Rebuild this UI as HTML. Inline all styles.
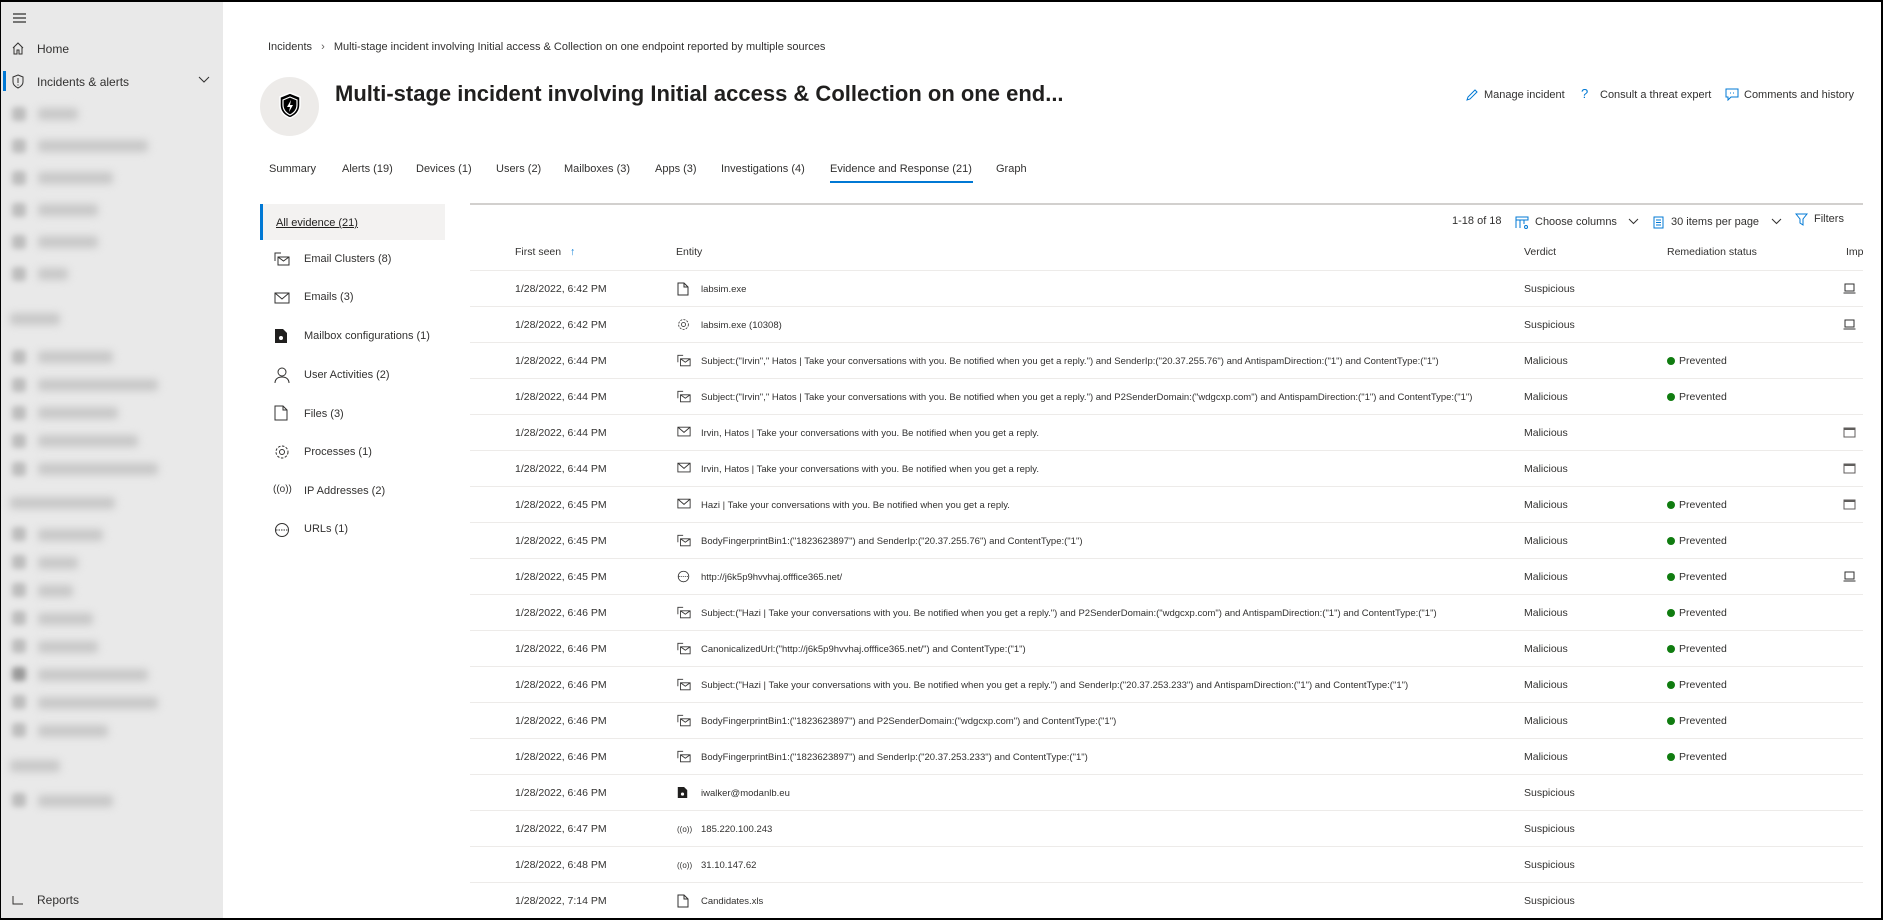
<!DOCTYPE html>
<html><head><meta charset="utf-8">
<style>
*{margin:0;padding:0;box-sizing:border-box}
html,body{width:1883px;height:920px;overflow:hidden;background:#fff;font-family:"Liberation Sans",sans-serif;color:#323130}
.a{position:absolute;white-space:nowrap}
#frame{position:absolute;left:0;top:0;width:1883px;height:920px;border:2px solid #000;border-left-width:1px;pointer-events:none;z-index:10}
#side{position:absolute;left:0;top:0;width:223px;height:920px;background:#e9e9e9}
.bl{position:absolute;background:#c8c8c8;filter:blur(4px);height:12px;border-radius:3px}
.bi{position:absolute;background:#bdbdbd;filter:blur(3px);width:14px;height:14px;border-radius:3px}
.tab{position:absolute;top:163px;font-size:11px;color:#323130}
.ev{position:absolute;left:304px;font-size:11px;color:#323130}
.evi{position:absolute;left:274px}
.row{position:absolute;left:470px;width:1393px;height:36px;border-bottom:1px solid #edebe9;font-size:10.5px;color:#323130}
.row span{position:absolute;top:12px;white-space:nowrap}
.row span.en{font-size:9.5px;top:13px}
.hd{position:absolute;top:246px;font-size:10.5px;color:#323130}
.dot{display:inline-block;width:8px;height:8px;border-radius:50%;background:#107c10;margin-right:4px;vertical-align:-1px}
svg{display:block}
</style></head><body>
<div id="side">
  <svg class="a" style="left:12px;top:12px" width="16" height="12" viewBox="0 0 16 12"><path d="M1 2h13M1 6h13M1 10h13" stroke="#323130" stroke-width="1.2"/></svg>
  <svg class="a" style="left:11px;top:41px" width="14" height="14" viewBox="0 0 14 14"><path d="M2 7L7 2l5 5M3 6v7h3v-4h2v4h3V6" fill="none" stroke="#323130" stroke-width="1"/></svg>
  <div class="a" style="left:37px;top:42px;font-size:12px">Home</div>
  <div class="a" style="left:3px;top:71px;width:3px;height:20px;background:#0078d4"></div>
  <svg class="a" style="left:11px;top:74px" width="14" height="15" viewBox="0 0 14 15"><path d="M7 1l5 2v5c0 3-3 5-5 6-2-1-5-3-5-6V3z M7 4v5M7 10.5v1" fill="none" stroke="#323130" stroke-width="1"/></svg>
  <div class="a" style="left:37px;top:75px;font-size:12px">Incidents &amp; alerts</div>
  <svg class="a" style="left:198px;top:76px" width="12" height="8" viewBox="0 0 12 8"><path d="M1 1l5 5 5-5" fill="none" stroke="#323130" stroke-width="1"/></svg>
  <div class="bi" style="left:12px;top:107px"></div><div class="bl" style="left:38px;top:108px;width:40px"></div>
  <div class="bi" style="left:12px;top:139px"></div><div class="bl" style="left:38px;top:140px;width:110px"></div>
  <div class="bi" style="left:12px;top:171px"></div><div class="bl" style="left:38px;top:172px;width:75px"></div>
  <div class="bi" style="left:12px;top:203px"></div><div class="bl" style="left:38px;top:204px;width:60px"></div>
  <div class="bi" style="left:12px;top:235px"></div><div class="bl" style="left:38px;top:236px;width:60px"></div>
  <div class="bi" style="left:12px;top:267px"></div><div class="bl" style="left:38px;top:268px;width:30px"></div>
  <div class="bl" style="left:10px;top:313px;width:50px"></div>
  <div class="bi" style="left:12px;top:350px"></div><div class="bl" style="left:38px;top:351px;width:75px"></div>
  <div class="bi" style="left:12px;top:378px"></div><div class="bl" style="left:38px;top:379px;width:120px"></div>
  <div class="bi" style="left:12px;top:406px"></div><div class="bl" style="left:38px;top:407px;width:80px"></div>
  <div class="bi" style="left:12px;top:434px"></div><div class="bl" style="left:38px;top:435px;width:100px"></div>
  <div class="bi" style="left:12px;top:462px"></div><div class="bl" style="left:38px;top:463px;width:120px"></div>
  <div class="bl" style="left:10px;top:497px;width:105px"></div>
  <div class="bi" style="left:12px;top:527px"></div><div class="bl" style="left:38px;top:529px;width:65px"></div>
  <div class="bi" style="left:12px;top:555px"></div><div class="bl" style="left:38px;top:557px;width:40px"></div>
  <div class="bi" style="left:12px;top:583px"></div><div class="bl" style="left:38px;top:585px;width:35px"></div>
  <div class="bi" style="left:12px;top:611px"></div><div class="bl" style="left:38px;top:613px;width:55px"></div>
  <div class="bi" style="left:12px;top:639px"></div><div class="bl" style="left:38px;top:641px;width:60px"></div>
  <div class="bi" style="left:12px;top:667px;background:#999"></div><div class="bl" style="left:38px;top:669px;width:110px"></div>
  <div class="bi" style="left:12px;top:695px"></div><div class="bl" style="left:38px;top:697px;width:120px"></div>
  <div class="bi" style="left:12px;top:723px"></div><div class="bl" style="left:38px;top:725px;width:70px"></div>
  <div class="bl" style="left:10px;top:760px;width:50px"></div>
  <div class="bi" style="left:12px;top:793px"></div><div class="bl" style="left:38px;top:795px;width:75px"></div>
  <svg class="a" style="left:12px;top:895px" width="12" height="10" viewBox="0 0 12 10"><path d="M1 1v8h10" fill="none" stroke="#323130"/></svg>
  <div class="a" style="left:37px;top:893px;font-size:12px">Reports</div>
</div>

<div class="a" style="left:268px;top:41px;font-size:11px;color:#323130">Incidents <span style="color:#605e5c;margin:0 6px">&#8250;</span> Multi-stage incident involving Initial access &amp; Collection on one endpoint reported by multiple sources</div>
<div class="a" style="left:260px;top:77px;width:59px;height:59px;border-radius:50%;background:#edebe9"></div>
<svg class="a" style="left:278px;top:92px" width="24" height="28" viewBox="0 0 24 28"><path d="M12 1l10 4v8c0 7-5 11-10 13C7 24 2 20 2 13V5z" fill="#000" stroke="#fff" stroke-width="1.5"/><path d="M12 5l7 3v5c0 5-3 8-7 10-4-2-7-5-7-10V8z" fill="none" stroke="#fff" stroke-width="1.2"/><path d="M13 8l-4 7h3l-1 5 4-7h-3z" fill="#fff"/></svg>
<div class="a" style="left:335px;top:81px;font-size:22px;font-weight:bold;color:#201f1e">Multi-stage incident involving Initial access &amp; Collection on one end...</div>

<svg class="a" style="left:1465px;top:88px" width="14" height="14" viewBox="0 0 14 14"><path d="M2 12l1-3 7-7 2 2-7 7z" fill="none" stroke="#0078d4"/></svg>
<div class="a" style="left:1484px;top:89px;font-size:11px">Manage incident</div>
<div class="a" style="left:1581px;top:86px;font-size:13px;color:#0078d4">?</div>
<div class="a" style="left:1600px;top:89px;font-size:11px">Consult a threat expert</div>
<svg class="a" style="left:1725px;top:88px" width="14" height="13" viewBox="0 0 14 13"><path d="M1 1h12v8H6l-3 3V9H1z" fill="none" stroke="#0078d4"/><path d="M5 5h1M8 5h1" stroke="#0078d4"/></svg>
<div class="a" style="left:1744px;top:89px;font-size:11px">Comments and history</div>

<div class="tab" style="left:269px">Summary</div>
<div class="tab" style="left:342px">Alerts (19)</div>
<div class="tab" style="left:416px">Devices (1)</div>
<div class="tab" style="left:496px">Users (2)</div>
<div class="tab" style="left:564px">Mailboxes (3)</div>
<div class="tab" style="left:655px">Apps (3)</div>
<div class="tab" style="left:721px">Investigations (4)</div>
<div class="tab" style="left:830px">Evidence and Response (21)</div>
<div class="tab" style="left:996px">Graph</div>
<div class="a" style="left:830px;top:181px;width:143px;height:2px;background:#0078d4"></div>

<div class="a" style="left:260px;top:204px;width:185px;height:36px;background:#f3f2f1;border-left:3px solid #0078d4"></div>
<div class="a" style="left:276px;top:217px;font-size:11px;text-decoration:underline;color:#201f1e">All evidence (21)</div>
<svg class="evi" style="top:252px" width="16" height="14" viewBox="0 0 16 14"><path d="M1 9V1h6M1 1h3M4 5h11v8H4z M4 5l5.5 4L15 5" fill="none" stroke="#323130"/></svg>
<div class="ev" style="top:253px">Email Clusters (8)</div>
<svg class="evi" style="top:292px" width="16" height="12" viewBox="0 0 16 12"><path d="M1 1h14v10H1z M1 1l7 6 7-6" fill="none" stroke="#323130"/></svg>
<div class="ev" style="top:291px">Emails (3)</div>
<svg class="evi" style="top:328px" width="14" height="16" viewBox="0 0 14 16"><path d="M1 1h8l4 4v10H1z" fill="#201f1e"/><circle cx="7" cy="10" r="2" fill="#fff"/></svg>
<div class="ev" style="top:330px">Mailbox configurations (1)</div>
<svg class="evi" style="top:367px" width="16" height="16" viewBox="0 0 16 16"><circle cx="8" cy="5" r="4" fill="none" stroke="#323130"/><path d="M1 16c0-4 3-6 7-6s7 2 7 6" fill="none" stroke="#323130"/></svg>
<div class="ev" style="top:369px">User Activities (2)</div>
<svg class="evi" style="top:405px" width="14" height="16" viewBox="0 0 14 16"><path d="M1 1h8l4 4v10H1z M9 1v4h4" fill="none" stroke="#323130"/></svg>
<div class="ev" style="top:408px">Files (3)</div>
<svg class="evi" style="top:444px" width="16" height="16" viewBox="0 0 16 16"><circle cx="8" cy="8" r="2.5" fill="none" stroke="#323130"/><circle cx="8" cy="8" r="6" fill="none" stroke="#323130" stroke-dasharray="2.5 1.5"/></svg>
<div class="ev" style="top:446px">Processes (1)</div>
<div class="a" style="left:273px;top:484px;font-size:10px;color:#323130">((o))</div>
<div class="ev" style="top:485px">IP Addresses (2)</div>
<svg class="evi" style="top:522px" width="16" height="16" viewBox="0 0 16 16"><circle cx="8" cy="8" r="6.5" fill="none" stroke="#323130"/><path d="M2 8h12" stroke="#323130" stroke-dasharray="1.5 1"/></svg>
<div class="ev" style="top:523px">URLs (1)</div>

<div class="a" style="left:470px;top:203px;width:1393px;height:2px;background:#d2d0ce"></div>
<div class="a" style="left:1452px;top:215px;font-size:11px">1-18 of 18</div>
<svg class="a" style="left:1515px;top:216px" width="14" height="13" viewBox="0 0 14 13"><path d="M1 1h12v3H1z M1 4v8M5 4v8M9 4v4" fill="none" stroke="#0078d4"/><circle cx="11" cy="11" r="1.5" fill="none" stroke="#0078d4"/></svg>
<div class="a" style="left:1535px;top:216px;font-size:11px">Choose columns</div>
<svg class="a" style="left:1628px;top:218px" width="11" height="7" viewBox="0 0 11 7"><path d="M1 1l4.5 4.5L10 1" fill="none" stroke="#323130"/></svg>
<svg class="a" style="left:1653px;top:216px" width="11" height="13" viewBox="0 0 11 13"><path d="M1 1h9v11H1z M3 4h5M3 6.5h5M3 9h5" fill="none" stroke="#0078d4"/></svg>
<div class="a" style="left:1671px;top:216px;font-size:11px">30 items per page</div>
<svg class="a" style="left:1771px;top:218px" width="11" height="7" viewBox="0 0 11 7"><path d="M1 1l4.5 4.5L10 1" fill="none" stroke="#323130"/></svg>
<svg class="a" style="left:1795px;top:213px" width="13" height="13" viewBox="0 0 13 13"><path d="M1 1h11L8 6v6L5 10V6z" fill="none" stroke="#0078d4"/></svg>
<div class="a" style="left:1814px;top:213px;font-size:11px">Filters</div>

<div class="hd" style="left:515px">First seen <span style="color:#0078d4;margin-left:6px">&#8593;</span></div>
<div class="hd" style="left:676px">Entity</div>
<div class="hd" style="left:1524px">Verdict</div>
<div class="hd" style="left:1667px">Remediation status</div>
<div class="hd" style="left:1846px">Imp</div>
<div class="a" style="left:470px;top:270px;width:1393px;height:1px;background:#edebe9"></div>

<div id="rows"></div>
<div id="frame"></div>
<script>
var F='<svg width="12" height="14" viewBox="0 0 12 14"><path d="M1 1h6l4 4v8H1z M7 1v4h4" fill="none" stroke="#323130"/></svg>';
var G='<svg width="13" height="13" viewBox="0 0 16 16"><circle cx="8" cy="8" r="2.5" fill="none" stroke="#323130"/><circle cx="8" cy="8" r="6" fill="none" stroke="#323130" stroke-dasharray="2.5 1.5"/></svg>';
var C='<svg width="14" height="13" viewBox="0 0 16 14"><path d="M1 9V1h6M4 5h11v8H4z M4 5l5.5 4L15 5" fill="none" stroke="#323130"/></svg>';
var M='<svg width="14" height="11" viewBox="0 0 16 12"><path d="M1 1h14v10H1z M1 1l7 6 7-6" fill="none" stroke="#323130"/></svg>';
var U='<svg width="13" height="13" viewBox="0 0 16 16"><circle cx="8" cy="8" r="6.5" fill="none" stroke="#323130"/><path d="M2 8h12" stroke="#323130" stroke-dasharray="1.5 1"/></svg>';
var B='<svg width="11" height="13" viewBox="0 0 14 16"><path d="M1 1h8l4 4v10H1z" fill="#201f1e"/><circle cx="7" cy="10" r="2" fill="#fff"/></svg>';
var I='<span style="font-size:8px;top:1px;left:0;position:relative">((o))</span>';
var L='<svg width="13" height="11" viewBox="0 0 13 11"><path d="M2 1h9v7H2z M0.5 10h12" fill="none" stroke="#323130"/></svg>';
var X='<svg width="13" height="11" viewBox="0 0 13 11"><path d="M1 1h11v9H1z" fill="none" stroke="#605e5c"/><path d="M1 1h11v2H1z" fill="#605e5c"/></svg>';
var T=' | Take your conversations with you. Be notified when you get a reply.';
var D=[
['6:42',F,'labsim.exe','Suspicious',0,L],
['6:42',G,'labsim.exe (10308)','Suspicious',0,L],
['6:44',C,'Subject:("Irvin"," Hatos'+T+'") and SenderIp:("20.37.255.76") and AntispamDirection:("1") and ContentType:("1")','Malicious',1,''],
['6:44',C,'Subject:("Irvin"," Hatos'+T+'") and P2SenderDomain:("wdgcxp.com") and AntispamDirection:("1") and ContentType:("1")','Malicious',1,''],
['6:44',M,'Irvin, Hatos'+T,'Malicious',0,X],
['6:44',M,'Irvin, Hatos'+T,'Malicious',0,X],
['6:45',M,'Hazi'+T,'Malicious',1,X],
['6:45',C,'BodyFingerprintBin1:("1823623897") and SenderIp:("20.37.255.76") and ContentType:("1")','Malicious',1,''],
['6:45',U,'http://j6k5p9hvvhaj.offfice365.net/','Malicious',1,L],
['6:46',C,'Subject:("Hazi'+T+'") and P2SenderDomain:("wdgcxp.com") and AntispamDirection:("1") and ContentType:("1")','Malicious',1,''],
['6:46',C,'CanonicalizedUrl:("http://j6k5p9hvvhaj.offfice365.net/") and ContentType:("1")','Malicious',1,''],
['6:46',C,'Subject:("Hazi'+T+'") and SenderIp:("20.37.253.233") and AntispamDirection:("1") and ContentType:("1")','Malicious',1,''],
['6:46',C,'BodyFingerprintBin1:("1823623897") and P2SenderDomain:("wdgcxp.com") and ContentType:("1")','Malicious',1,''],
['6:46',C,'BodyFingerprintBin1:("1823623897") and SenderIp:("20.37.253.233") and ContentType:("1")','Malicious',1,''],
['6:46',B,'iwalker@modanlb.eu','Suspicious',0,''],
['6:47',I,'185.220.100.243','Suspicious',0,''],
['6:48',I,'31.10.147.62','Suspicious',0,''],
['7:14',F,'Candidates.xls','Suspicious',0,'']];
var h='';
D.forEach(function(r,i){
h+='<div class="row" style="top:'+(271+i*36)+'px"><span style="left:45px">1/28/2022, '+r[0]+' PM</span>'+
'<span style="left:207px;top:11px">'+r[1]+'</span><span class="en" style="left:231px">'+r[2].replace(/</g,'&lt;')+'</span>'+
'<span style="left:1054px">'+r[3]+'</span>'+(r[4]?'<span style="left:1197px"><i class="dot"></i>Prevented</span>':'')+
(r[5]?'<span style="left:1373px;top:12px">'+r[5]+'</span>':'')+'</div>';});
document.getElementById('rows').innerHTML=h;
</script>
</body></html>
